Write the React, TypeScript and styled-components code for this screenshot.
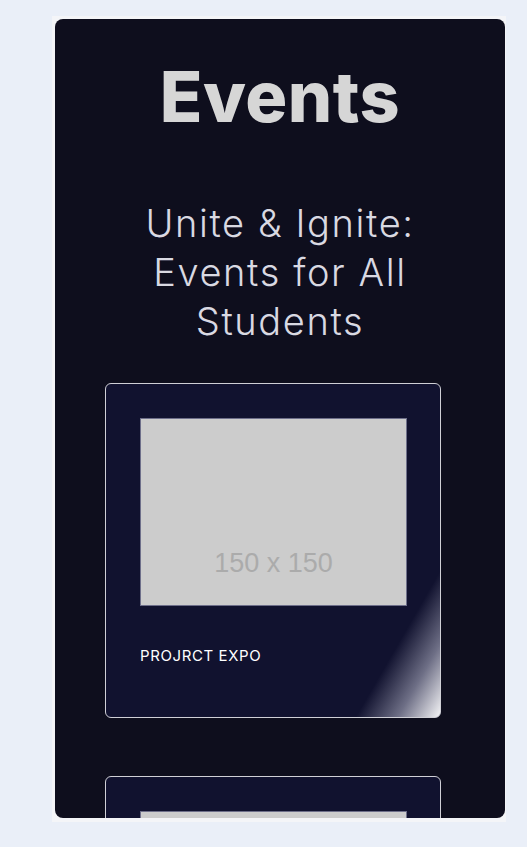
import React from "react";
import styled, { createGlobalStyle } from "styled-components";

const events = [{ title: "PROJRCT EXPO" }, { title: "HACKATHON" }];

const App = () => {
  return (
    <>
      <GlobalStyle />
      <Frame>
        <Panel>
          <Title>Events</Title>
          <Subtitle>
            Unite &amp; Ignite:
            <br />
            Events for All
            <br />
            Students
          </Subtitle>
          <CardList>
            {events.map((ev) => (
              <Card key={ev.title}>
                <Placeholder>
                  <span>150 x 150</span>
                </Placeholder>
                <CardLabel>{ev.title}</CardLabel>
              </Card>
            ))}
          </CardList>
        </Panel>
      </Frame>
    </>
  );
};

export default App;

const GlobalStyle = createGlobalStyle`
  body {
    margin: 0;
    background: #eaeff8;
    font-family: "Inter", "Liberation Sans", sans-serif;
  }
`;

const Frame = styled.div`
  margin: 16px 0 0 52px;
  width: 454px;
  height: 806px;
  box-sizing: border-box;
  padding: 3px 1px 4px 3px;
  background: #f4f5f8;
`;

const Panel = styled.div`
  height: 100%;
  overflow: hidden;
  border-radius: 8px;
  background: #0e0e1d;
  display: flex;
  flex-direction: column;
  align-items: center;
`;

const Title = styled.h1`
  margin: 38px 0 0;
  font-size: 70px;
  line-height: 80px;
  font-weight: 800;
  letter-spacing: 0.5px;
  color: #d6d6d6;
`;

const Subtitle = styled.h2`
  margin: 62px 0 0;
  font-size: 38px;
  line-height: 49px;
  font-weight: 300;
  letter-spacing: 1.6px;
  color: #d9d9e2;
  text-align: center;
`;

const CardList = styled.div`
  margin-top: 37px;
  align-self: flex-start;
  margin-left: 50px;
  display: flex;
  flex-direction: column;
  gap: 58px;
`;

const Card = styled.div`
  width: 336px;
  height: 335px;
  box-sizing: border-box;
  padding: 34px 33px 0 34px;
  border: 1px solid #cfcfd6;
  border-radius: 6px;
  background: linear-gradient(
    120deg,
    #11122f 0%,
    #11122f 84%,
    #6e6f86 92%,
    #f4f4f6 100%
  );
`;

const Placeholder = styled.div`
  width: 267px;
  height: 188px;
  background: #cccccc;
  border: 1px solid #6e6f8a;
  box-sizing: border-box;
  display: flex;
  justify-content: center;
  padding-top: 129px;
  font-family: "Liberation Sans", Arial, sans-serif;
  font-size: 27px;
  color: #ababab;
`;

const CardLabel = styled.div`
  margin-top: 40px;
  font-size: 15px;
  font-weight: 400;
  letter-spacing: 0.6px;
  color: #ffffff;
`;
